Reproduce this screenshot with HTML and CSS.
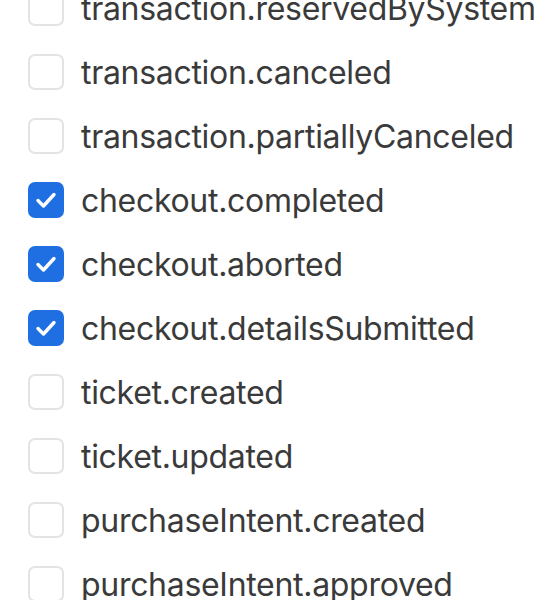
FILE: index.html
```html
<!DOCTYPE html>
<html>

<head>
    <title>Webhook events</title>
    <link rel="stylesheet" href="styles.css">
</head>

<body>
    <div class="event-list">
        <label class="event"><span class="box"></span><span class="event-name">transaction.reservedBySystem</span></label>
        <label class="event"><span class="box"></span><span class="event-name">transaction.canceled</span></label>
        <label class="event"><span class="box"></span><span class="event-name">transaction.partiallyCanceled</span></label>
        <label class="event"><span class="box checked"><svg viewBox="0 0 36 36"><path d="M10 18.5l5.5 5.5L26 12.5"/></svg></span><span class="event-name">checkout.completed</span></label>
        <label class="event"><span class="box checked"><svg viewBox="0 0 36 36"><path d="M10 18.5l5.5 5.5L26 12.5"/></svg></span><span class="event-name">checkout.aborted</span></label>
        <label class="event"><span class="box checked"><svg viewBox="0 0 36 36"><path d="M10 18.5l5.5 5.5L26 12.5"/></svg></span><span class="event-name">checkout.detailsSubmitted</span></label>
        <label class="event"><span class="box"></span><span class="event-name">ticket.created</span></label>
        <label class="event"><span class="box"></span><span class="event-name">ticket.updated</span></label>
        <label class="event"><span class="box"></span><span class="event-name">purchaseIntent.created</span></label>
        <label class="event"><span class="box"></span><span class="event-name">purchaseIntent.approved</span></label>
    </div>
</body>

</html>
```

FILE: styles.css
```css
* {
    margin: 0;
    padding: 0;
    box-sizing: border-box;
}

body {
    background: #ffffff;
    font-family: Inter, "Noto Sans", sans-serif;
    color: #3a3a3a;
    overflow: hidden;
}

.event-list {
    display: flex;
    flex-direction: column;
    margin-top: -24px;
    padding-left: 28px;
}

.event {
    display: flex;
    align-items: center;
    height: 64px;
    gap: 17px;
}

.box {
    width: 36px;
    height: 36px;
    flex-shrink: 0;
    border: 2px solid #e3e3e3;
    border-radius: 7px;
    background: #ffffff;
}

.box.checked {
    border: none;
    background: #1f6fe3;
}

.box svg {
    display: block;
    width: 36px;
    height: 36px;
}

.box svg path {
    fill: none;
    stroke: #ffffff;
    stroke-width: 3.4;
    stroke-linecap: round;
    stroke-linejoin: round;
}

.event-name {
    font-size: 32px;
    letter-spacing: -0.3px;
    line-height: 40px;
    padding-top: 2px;
    white-space: nowrap;
}
```
